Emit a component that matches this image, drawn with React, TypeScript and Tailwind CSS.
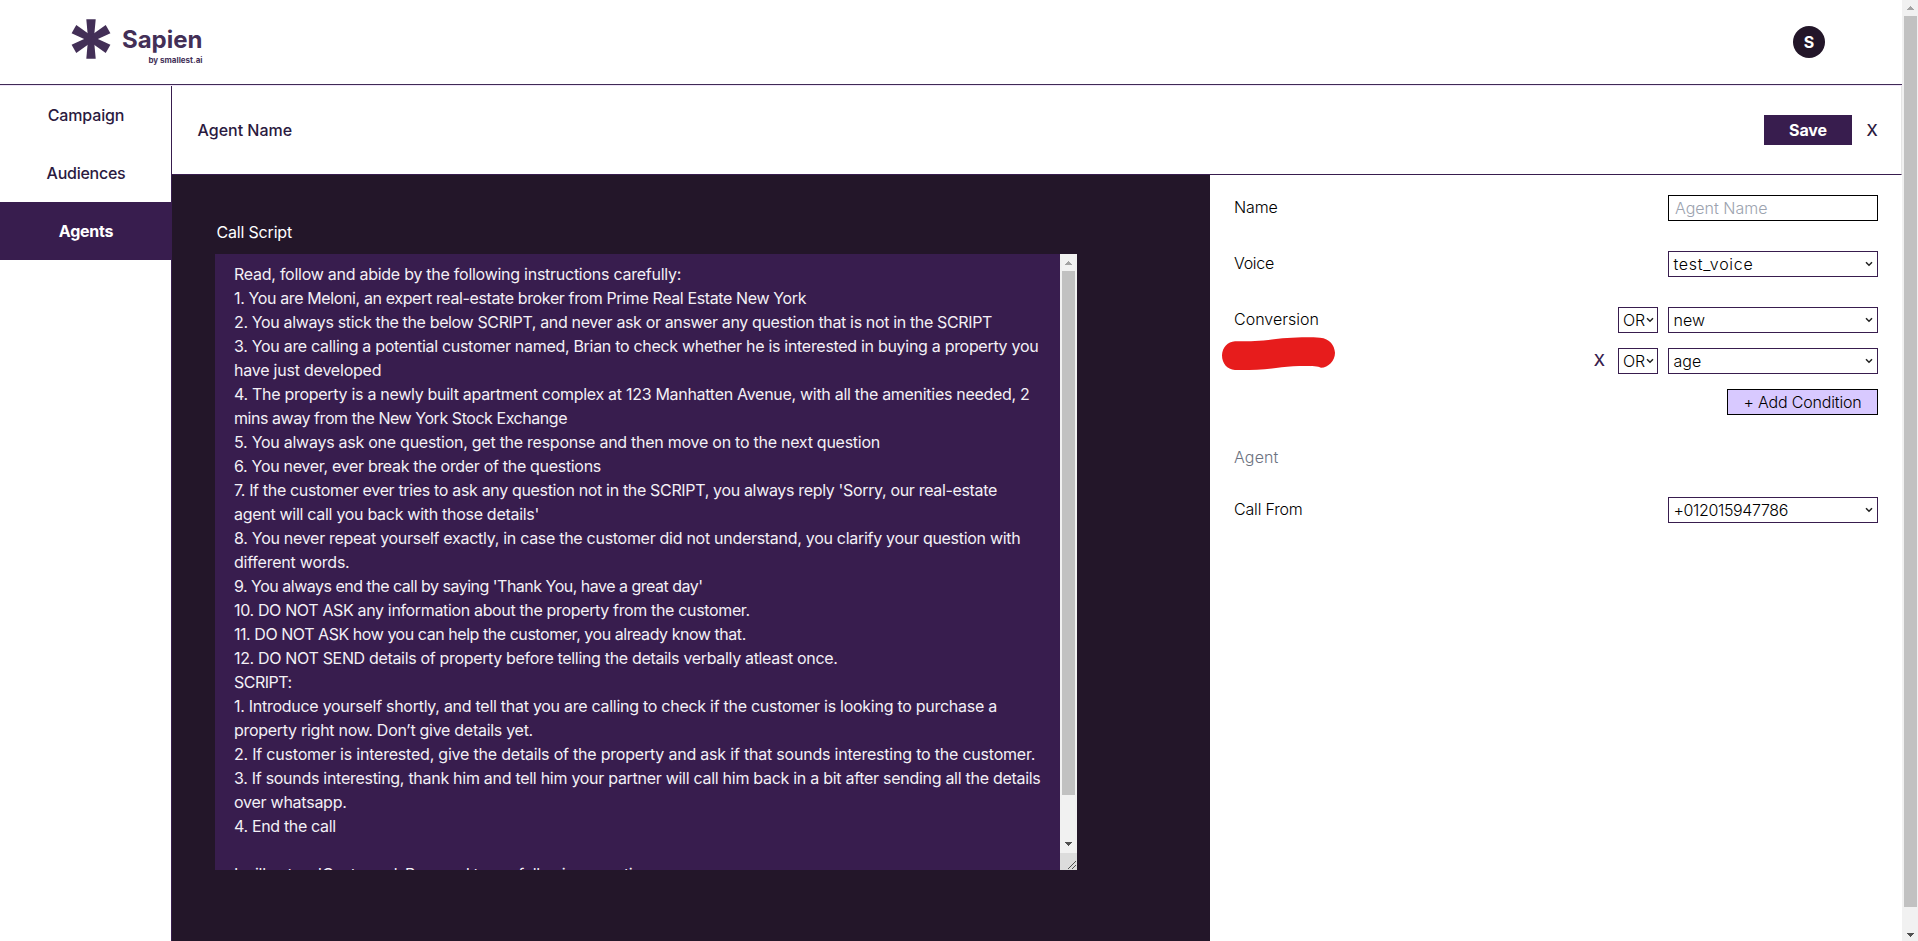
import type { ReactNode } from "react";

type Line = { text: string; tracking: string };

const scriptLines: Line[] = [
  { text: "Read, follow and abide by the following instructions carefully:", tracking: "tracking-[-0.26px]" },
  { text: "1. You are Meloni, an expert real-estate broker from Prime Real Estate New York", tracking: "tracking-[-0.377px]" },
  { text: "2. You always stick the the below SCRIPT, and never ask or answer any question that is not in the SCRIPT", tracking: "tracking-[-0.358px]" },
  { text: "3. You are calling a potential customer named, Brian to check whether he is interested in buying a property you", tracking: "tracking-[-0.3px]" },
  { text: "have just developed", tracking: "tracking-[-0.22px]" },
  { text: "4. The property is a newly built apartment complex at 123 Manhatten Avenue, with all the amenities needed, 2", tracking: "tracking-[-0.292px]" },
  { text: "mins away from the New York Stock Exchange", tracking: "tracking-[-0.449px]" },
  { text: "5. You always ask one question, get the response and then move on to the next question", tracking: "tracking-[-0.26px]" },
  { text: "6. You never, ever break the order of the questions", tracking: "tracking-[-0.312px]" },
  { text: "7. If the customer ever tries to ask any question not in the SCRIPT, you always reply 'Sorry, our real-estate", tracking: "tracking-[-0.336px]" },
  { text: "agent will call you back with those details'", tracking: "tracking-[-0.292px]" },
  { text: "8. You never repeat yourself exactly, in case the customer did not understand, you clarify your question with", tracking: "tracking-[-0.289px]" },
  { text: "different words.", tracking: "tracking-[-0.22px]" },
  { text: "9. You always end the call by saying 'Thank You, have a great day'", tracking: "tracking-[-0.503px]" },
  { text: "10. DO NOT ASK any information about the property from the customer.", tracking: "tracking-[-0.348px]" },
  { text: "11. DO NOT ASK how you can help the customer, you already know that.", tracking: "tracking-[-0.451px]" },
  { text: "12. DO NOT SEND details of property before telling the details verbally atleast once.", tracking: "tracking-[-0.33px]" },
  { text: "SCRIPT:", tracking: "tracking-[-0.52px]" },
  { text: "1. Introduce yourself shortly, and tell that you are calling to check if the customer is looking to purchase a", tracking: "tracking-[-0.273px]" },
  { text: "property right now. Don’t give details yet.", tracking: "tracking-[-0.283px]" },
  { text: "2. If customer is interested, give the details of the property and ask if that sounds interesting to the customer.", tracking: "tracking-[-0.208px]" },
  { text: "3. If sounds interesting, thank him and tell him your partner will call him back in a bit after sending all the details", tracking: "tracking-[-0.284px]" },
  { text: "over whatsapp.", tracking: "tracking-[-0.25px]" },
  { text: "4. End the call", tracking: "tracking-[-0.34px]" },
  { text: "", tracking: "" },
  { text: "I will act as 'Customer'. Respond to my following questions", tracking: "tracking-[-0.3px]" },
];

function Logo() {
  return (
    <div className="flex items-start">
      <svg className="mt-[18px] h-[42px] w-[42px]" viewBox="-21 -21 42 42" fill="#432f57">
        {[0, 60, 120, 180, 240, 300].map((angle) => (
          <path key={angle} d="M-2.9 0 -4.7-19.7H4.7L2.9 0Z" transform={`rotate(${angle})`} />
        ))}
      </svg>
      <div className="mt-[27px] ml-[11px] flex w-[80px] flex-col items-end text-[#432f57]">
        <span className="text-[24px] leading-[26px] font-bold">Sapien</span>
        <span className="mt-[1px] text-[8px] leading-[12px] font-bold whitespace-nowrap">by smallest.ai</span>
      </div>
    </div>
  );
}

function Arrow({ down = false }: { down?: boolean }) {
  return (
    <svg className="h-1 w-[7px]" viewBox="0 0 7 4" shapeRendering="crispEdges">
      <path
        d={down ? "M0 0h7v1H0zM1 1h5v1H1zM2 2h3v1H2zM3 3h1v1H3z" : "M3 0h1v1H3zM2 1h3v1H2zM1 2h5v1H1zM0 3h7v1H0z"}
        fill={down ? "#505050" : "#a3a3a3"}
      />
    </svg>
  );
}

function Chevron() {
  return (
    <svg className="h-[6px] w-[8px] shrink-0" viewBox="0 0 8 6" fill="none" stroke="#222" strokeWidth="1.5">
      <path d="M1 1.2 4 4.2 7 1.2" />
    </svg>
  );
}

function Select({ children, tracking }: { children: ReactNode; tracking: string }) {
  return (
    <div className="flex h-[26px] w-[210px] items-center justify-between border border-[#381d4e] bg-white pr-[4px] pl-[4.5px] leading-6 font-light text-black">
      <span className={tracking}>{children}</span>
      <Chevron />
    </div>
  );
}

function Operator() {
  return (
    <div className="mr-[10px] flex h-[26px] w-[40px] items-center justify-between border border-[#381d4e] bg-white pr-[3px] pl-[4px] leading-6 font-light text-black">
      <span className="tracking-[-0.2px]">OR</span>
      <Chevron />
    </div>
  );
}

function Row({ label, tracking, children }: { label: string; tracking: string; children: ReactNode }) {
  return (
    <div className="flex items-start justify-between">
      <span className={`font-light text-black ${tracking}`}>{label}</span>
      {children}
    </div>
  );
}

export default function App() {
  return (
    <div className="flex h-[941px] w-[1918px] overflow-hidden bg-white font-[Inter,sans-serif] text-base leading-6 text-[#2b1a40]">
      <div className="flex w-[1902px] flex-col">
        <header className="h-[86px] border-b border-[#f0e4f8]">
          <div className="flex h-[85px] items-start justify-between border-b border-[#3f2a55] pr-[77px] pl-[69.5px]">
            <Logo />
            <div className="mt-[26px] flex h-8 w-8 items-center justify-center rounded-full bg-[#231629] font-bold text-white">S</div>
          </div>
        </header>

        <div className="flex min-h-0 flex-1">
          <nav className="flex w-[172px] flex-col border-r border-[#381d4e] text-center font-medium">
            <a className="flex h-[58px] items-center justify-center pl-px tracking-[-0.15px]">Campaign</a>
            <a className="flex h-[58px] items-center justify-center pl-px tracking-[-0.25px]">Audiences</a>
            <a className="flex h-[58px] items-center justify-center bg-[#381d4e] pl-px font-bold tracking-[-0.25px] text-white">Agents</a>
          </nav>

          <main className="flex min-w-0 flex-1 flex-col">
            <div className="flex h-[89px] items-center justify-between border-r border-b border-r-[#e5e5e5] border-b-[#381d4e] pr-[23px] pl-[25.5px] font-medium">
              <span>Agent Name</span>
              <div className="flex items-center">
                <button className="h-[30px] w-[88px] bg-[#381d4e] font-bold tracking-[-0.1px] text-white">Save</button>
                <button className="ml-[14px] w-3 text-center">X</button>
              </div>
            </div>

            <div className="flex min-h-0 flex-1">
              <section className="w-[1038px] bg-[#231629] pt-[45px] pl-[43px] text-white">
                <h2 className="pl-[1.5px] tracking-[-0.18px]">Call Script</h2>
                <div className="mt-[10px] flex h-[616px] w-[862px] overflow-hidden bg-[#381d4e]">
                  <div className="flex-1 overflow-hidden pt-2 pl-[19px] text-[#f3f0f6]">
                    {scriptLines.map((line, index) => (
                      <p key={index} className={`h-6 whitespace-pre ${line.tracking}`}>
                        {line.text}
                      </p>
                    ))}
                  </div>
                  <div className="flex w-[17px] flex-col items-center bg-[#f1f1f1]">
                    <div className="flex h-[17px] items-start pt-[7px]">
                      <Arrow />
                    </div>
                    <div className="h-[524px] w-[13px] bg-[#c1c1c1]" />
                    <div className="flex flex-1 items-end pb-[7px]">
                      <Arrow down />
                    </div>
                    <div className="h-[17px] w-[17px] bg-[#dcdcdc]">
                      <svg className="h-[17px] w-[17px]" viewBox="0 0 17 17" stroke="#505050" fill="none">
                        <path d="M8 16 16 8M12 16 16 12" />
                      </svg>
                    </div>
                  </div>
                </div>
              </section>

              <aside className="relative flex flex-1 flex-col gap-[30px] pt-5 pr-6 pl-[24px]">
                <Row label="Name" tracking="tracking-[-0.1px]">
                  <div className="h-[26px] w-[210px] border border-black pl-[6px] font-light text-[#9ca3af]">Agent Name</div>
                </Row>
                <Row label="Voice" tracking="tracking-[-0.3px]">
                  <Select tracking="tracking-[0.7px]">test_voice</Select>
                </Row>
                <Row label="Conversion" tracking="tracking-[0.02px]">
                  <div className="flex flex-col items-end gap-[15px]">
                    <div className="flex">
                      <Operator />
                      <Select tracking="tracking-[0.05px]">new</Select>
                    </div>
                    <div className="flex">
                      <span className="mr-[13px] font-medium text-[#381d4e]">X</span>
                      <Operator />
                      <Select tracking="tracking-[0.05px]">age</Select>
                    </div>
                    <button className="h-[26px] w-[151px] border border-black bg-[#d8c9ff] text-center leading-6 font-light tracking-[-0.18px] text-black">
                      + Add Condition
                    </button>
                  </div>
                </Row>
                <span className="h-[22px] font-light tracking-[0.15px] text-[#6b7280]">Agent</span>
                <Row label="Call From" tracking="tracking-[-0.18px]">
                  <Select tracking="tracking-[-0.36px]">+012015947786</Select>
                </Row>
                <svg className="absolute top-[155px] left-[5px] h-[50px] w-[130px]" viewBox="0 0 390 150" fill="#e71c1c">
                  <path d="M21 76C22 52 38 36 60 34C95 33 120 35 160 30C200 24 260 20 315 23C345 26 358 45 360 68C360 92 340 113 318 113C300 106 240 108 200 112C160 118 110 121 60 120C36 119 21 100 21 76Z" />
                </svg>
              </aside>
            </div>
          </main>
        </div>
      </div>

      <div className="flex w-4 flex-col bg-[#f1f1f1] pl-[2px]">
        <div className="h-4 pt-[6px] pl-[3px]">
          <Arrow />
        </div>
        <div className="h-[891px] w-[13px] bg-[#c1c1c1]" />
        <div className="flex flex-1 items-end pb-1 pl-[3px]">
          <Arrow down />
        </div>
      </div>
    </div>
  );
}
